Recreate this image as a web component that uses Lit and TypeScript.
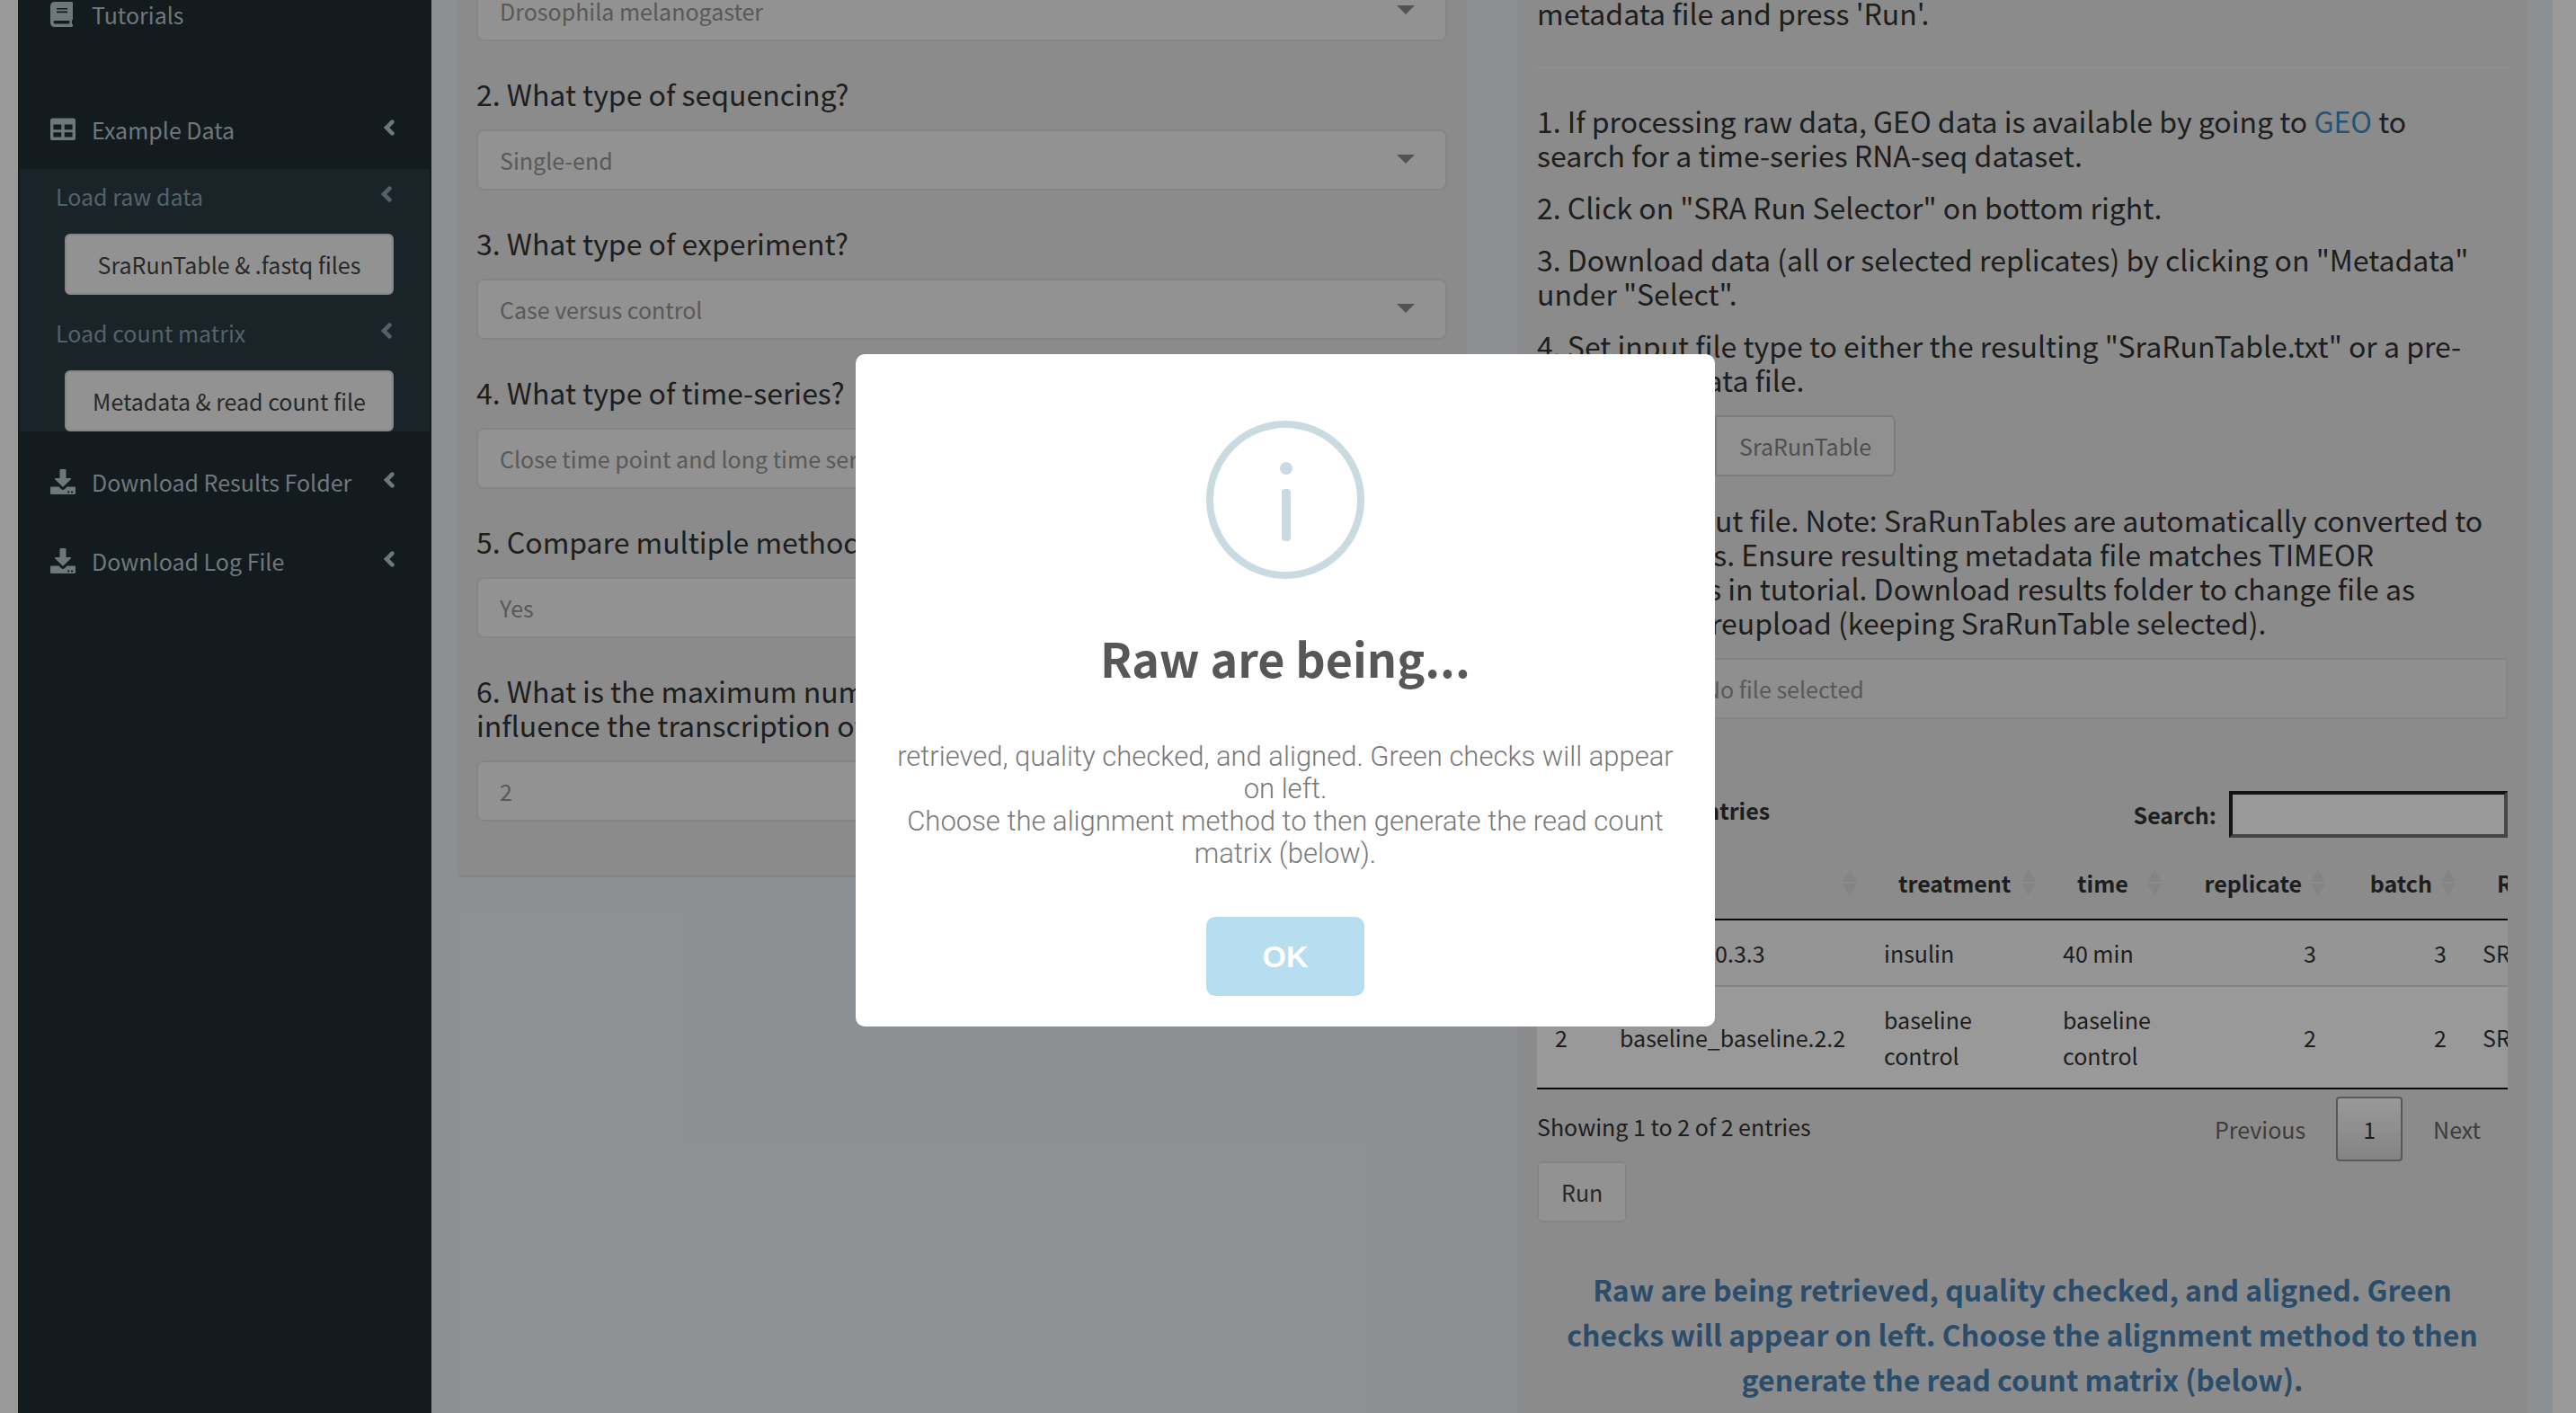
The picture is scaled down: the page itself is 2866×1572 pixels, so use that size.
import { LitElement, html, css, svg } from "lit";
import { customElement } from "lit/decorators.js";

interface Question {
  id: string;
  label: string;
  value: string;
  kind: "select" | "text";
}

const QUESTIONS: Question[] = [
  { id: "sequencing", label: "2. What type of sequencing?", value: "Single-end", kind: "select" },
  { id: "experiment", label: "3. What type of experiment?", value: "Case versus control", kind: "select" },
  { id: "series", label: "4. What type of time-series?", value: "Close time point and long time series", kind: "select" },
  { id: "methods", label: "5. Compare multiple methods?", value: "Yes", kind: "select" },
  {
    id: "factors",
    label: "6. What is the maximum number of transcription factors that can influence the transcription of a gene?",
    value: "2",
    kind: "text",
  },
];

const ROWS = [
  ["1", "insulin_40.3.3", "insulin", "40 min", "3", "3", "SRR"],
  ["2", "baseline_baseline.2.2", "baseline control", "baseline control", "2", "2", "SRR"],
];

const COLUMNS = ["", "ID", "treatment", "time", "replicate", "batch", "Run"];

const chevron = html`<svg class="chevron" viewBox="0 0 12 20" aria-hidden="true">
  <path d="M9.4 3.6 L3 10 L9.4 16.4" fill="none" stroke="currentColor" stroke-width="4.6" stroke-linecap="round" stroke-linejoin="miter" />
</svg>`;

const bookIcon = html`<svg class="icon" viewBox="0 0 28 28" aria-hidden="true">
  <path
    fill="currentColor"
    fill-rule="evenodd"
    d="M5.2 0H23.6Q25 0 25 1.4V19Q25 20 24.1 20.4Q23.6 22.6 24.1 24.6Q25 25 25 26V26.7Q25 28 23.6 28H5.2Q0 28 0 22.8V5.2Q0 0 5.2 0ZM7 7V8.6H19V7ZM7 10.6V12.2H19V10.6ZM5.2 21Q3.5 21 3.5 22.8Q3.5 24.5 5.2 24.5H21.4Q21.2 22.7 21.4 21Z"
  />
</svg>`;

const tableIcon = html`<svg class="icon" viewBox="0 0 28 28" aria-hidden="true">
  <path
    fill="currentColor"
    fill-rule="evenodd"
    d="M2.6 1.5H25.4Q28 1.5 28 4.1V23.4Q28 26 25.4 26H2.6Q0 26 0 23.4V4.1Q0 1.5 2.6 1.5ZM3.4 8.5V14.3H12.3V8.5ZM15.7 8.5V14.3H24.6V8.5ZM3.4 17.2V22.5H12.3V17.2ZM15.7 17.2V22.5H24.6V17.2Z"
  />
</svg>`;

const downloadIcon = html`<svg class="icon" viewBox="0 0 28 28" aria-hidden="true">
  <path
    fill="currentColor"
    fill-rule="evenodd"
    d="M11.8 0H16.2Q17.5 0 17.5 1.3V10H22.3Q23.8 10 22.8 11.3L14.7 19.2Q14 19.8 13.3 19.2L5.2 11.3Q4.2 10 5.7 10H10.5V1.3Q10.5 0 11.8 0ZM1.3 19.5H9.3L12 22.1Q14 23.8 16 22.1L18.7 19.5H26.7Q28 19.5 28 20.8V26.7Q28 28 26.7 28H1.3Q0 28 0 26.7V20.8Q0 19.5 1.3 19.5ZM20.3 24.3A1.1 1.1 0 1 0 20.3 26.5A1.1 1.1 0 1 0 20.3 24.3ZM24.1 24.3A1.1 1.1 0 1 0 24.1 26.5A1.1 1.1 0 1 0 24.1 24.3Z"
  />
</svg>`;

@customElement("nav-sidebar")
export class NavSidebar extends LitElement {
  static styles = css`
    :host {
      display: block;
      overflow: hidden;
      background: #222d32;
      color: #b8c7ce;
    }
    .menu {
      margin: -28px 0 0;
      padding: 0;
      list-style: none;
    }
    .item {
      display: flex;
      align-items: center;
      padding: 24px 41px 24px 36px;
      line-height: 40px;
      color: inherit;
      text-decoration: none;
    }
    .spaced {
      margin-bottom: 40px;
    }
    .icon {
      width: 28px;
      height: 28px;
      margin-right: 18px;
    }
    .chevron {
      width: 12px;
      height: 20px;
      margin-left: auto;
      margin-bottom: 4px;
    }
    .submenu {
      margin: 0 2px 12px;
      padding: 10px 40px 0;
      background: #2c3b41;
      color: #8aa4af;
    }
    .sub {
      display: flex;
      align-items: center;
      height: 40px;
      padding-right: 2px;
      line-height: 40px;
      color: inherit;
      text-decoration: none;
    }
    .load {
      display: block;
      width: calc(100% - 10px);
      height: 68px;
      margin: 22px 0 22px 10px;
      padding: 0;
      border: 2px solid #ddd;
      border-radius: 6px;
      background: #f4f4f4;
      color: #444;
      font: inherit;
    }
    .load:last-child {
      margin-bottom: 0;
    }
  `;

  render() {
    return html`
      <ul class="menu">
        <li class="spaced"><a class="item" href="#tutorials">${bookIcon}Tutorials</a></li>
        <li>
          <a class="item" href="#example">${tableIcon}Example Data${chevron}</a>
          <div class="submenu">
            <a class="sub" href="#raw">Load raw data${chevron}</a>
            <button class="load" type="button">SraRunTable &amp; .fastq files</button>
            <a class="sub" href="#matrix">Load count matrix${chevron}</a>
            <button class="load" type="button">Metadata &amp; read count file</button>
          </div>
        </li>
        <li><a class="item" href="#results">${downloadIcon}Download Results Folder${chevron}</a></li>
        <li><a class="item" href="#log">${downloadIcon}Download Log File${chevron}</a></li>
      </ul>
    `;
  }
}

@customElement("question-form")
export class QuestionForm extends LitElement {
  static styles = css`
    :host {
      display: block;
    }
    .form {
      padding: 0 21px 60px;
    }
    .question {
      display: flex;
      flex-direction: column;
      gap: 21px;
      margin-top: 39px;
    }
    .question:first-child {
      margin-top: 0;
    }
    .label {
      font-size: 32px;
      line-height: 38px;
    }
    .field {
      position: relative;
      display: flex;
    }
    .control {
      box-sizing: border-box;
      flex: 1;
      min-width: 0;
      height: 68px;
      margin: 0;
      padding: 0 24px;
      border: 2px solid #dedede;
      border-radius: 8px;
      background: #f3f3f3;
      color: #949494;
      font: inherit;
      appearance: none;
      outline: none;
    }
    .caret {
      position: absolute;
      right: 36px;
      top: 28px;
      width: 20px;
      height: 10px;
      pointer-events: none;
    }
  `;

  private control(q: Question) {
    if (q.kind === "text") {
      return html`<div class="field"><input class="control" id=${q.id} .value=${q.value} /></div>`;
    }
    return html`<div class="field">
      <select class="control" id=${q.id} aria-label=${q.label || "Organism"}>
        <option>${q.value}</option>
      </select>
      <svg class="caret" viewBox="0 0 20 10" aria-hidden="true"><path d="M0 0H20L10 10Z" fill="#8a8a8a" /></svg>
    </div>`;
  }

  render() {
    return html`<form class="form">
      <div class="question">
        ${this.control({ id: "organism", label: "", value: "Drosophila melanogaster", kind: "select" })}
      </div>
      ${QUESTIONS.map(
        (q) => html`<div class="question"><label class="label" for=${q.id}>${q.label}</label>${this.control(q)}</div>`
      )}
    </form>`;
  }
}

@customElement("metadata-table")
export class MetadataTable extends LitElement {
  static styles = css`
    :host {
      display: block;
    }
    .tools {
      display: flex;
      justify-content: space-between;
      align-items: flex-start;
      margin-bottom: 10px;
      font-weight: 700;
    }
    .length {
      display: flex;
      align-items: center;
      gap: 8px;
      height: 42px;
      line-height: 40px;
    }
    .count {
      width: 88px;
      height: 40px;
      font: inherit;
      font-weight: 400;
    }
    .search {
      display: flex;
      align-items: center;
      gap: 14px;
    }
    .query {
      box-sizing: border-box;
      width: 310px;
      height: 52px;
      border: 4px solid;
      border-color: #222 #767676 #767676 #222;
      background: #fff;
      font: inherit;
    }
    .scroll {
      overflow: hidden;
    }
    .grid {
      width: 1240px;
      table-layout: fixed;
      border-collapse: separate;
      border-spacing: 0;
      border-bottom: 2px solid #111;
    }
    .c0 { width: 72px; }
    .c1 { width: 294px; }
    .c2 { width: 199px; }
    .c3 { width: 140px; }
    .c4 { width: 182px; }
    .c5 { width: 145px; }
    .head {
      box-sizing: border-box;
      padding: 20px 0 20px 36px;
      border-bottom: 2px solid #111;
      text-align: left;
      line-height: 40px;
    }
    .headbox {
      display: flex;
      align-items: center;
      justify-content: space-between;
      padding-right: 10px;
    }
    .head.num .headbox {
      justify-content: flex-end;
      gap: 10px;
    }
    .sort {
      width: 16px;
      height: 30px;
    }
    .cell {
      padding: 16px 20px;
      line-height: 40px;
      background: #fff;
    }
    .row:first-child .cell {
      border-bottom: 2px solid #ddd;
      background: #f9f9f9;
    }
    .num {
      text-align: right;
    }
    .foot {
      display: flex;
      justify-content: space-between;
      align-items: flex-start;
      padding-top: 8px;
    }
    .info {
      padding-top: 13px;
      line-height: 40px;
    }
    .pages {
      display: flex;
      gap: 4px;
    }
    .page {
      padding: 14px 28px;
      border: 2px solid transparent;
      border-radius: 4px;
      background: none;
      color: #666;
      font: inherit;
      line-height: 40px;
    }
    .current {
      border-color: #979797;
      background: linear-gradient(#fff, #dcdcdc);
      color: #333;
    }
  `;

  private sortMark() {
    return html`<svg class="sort" viewBox="0 0 16 30" aria-hidden="true">
      ${svg`<path d="M8 0L16 14H0Z M0 16H16L8 30Z" fill="#dcdcdc" />`}
    </svg>`;
  }

  render() {
    const numeric = (i: number) => (i === 4 || i === 5 ? "num" : "");
    return html`
      <div class="tools">
        <label class="length">Show<select class="count"><option>10</option></select>entries</label>
        <label class="search">Search:<input class="query" type="search" /></label>
      </div>
      <div class="scroll">
        <table class="grid">
          <thead>
            <tr>
              ${COLUMNS.map(
                (name, i) => html`<th class="head c${i} ${numeric(i)}" scope="col">
                  <div class="headbox"><span>${name}</span>${i === 0 ? "" : this.sortMark()}</div>
                </th>`
              )}
            </tr>
          </thead>
          <tbody>
            ${ROWS.map(
              (row) => html`<tr class="row">${row.map((v, i) => html`<td class="cell ${numeric(i)}">${v}</td>`)}</tr>`
            )}
          </tbody>
        </table>
      </div>
      <div class="foot">
        <span class="info">Showing 1 to 2 of 2 entries</span>
        <div class="pages">
          <button class="page" type="button">Previous</button>
          <button class="page current" type="button">1</button>
          <button class="page" type="button">Next</button>
        </div>
      </div>
    `;
  }
}

@customElement("process-panel")
export class ProcessPanel extends LitElement {
  static styles = css`
    :host {
      display: block;
    }
    .panel {
      padding: 17px 21px 60px;
    }
    .text {
      margin: 0 0 20px;
      padding-right: 16px;
      font-size: 32px;
      line-height: 38px;
    }
    .rule {
      height: 2px;
      margin: 41px 0 39px;
      border: 0;
      background: #eee;
    }
    .link {
      color: #3c8dbc;
      text-decoration: none;
    }
    .toggle {
      display: flex;
      margin: 21px 0 29px;
    }
    .choice {
      box-sizing: border-box;
      height: 68px;
      padding: 0 25px;
      border: 2px solid #cfcfcf;
      background: #f1f1f1;
      color: #848484;
      font: inherit;
    }
    .choice:first-child {
      width: 200px;
      border-radius: 6px 0 0 6px;
    }
    .choice:last-child {
      margin-left: -2px;
      border-radius: 0 6px 6px 0;
    }
    .upload {
      display: flex;
      margin: 21px 0 80px;
    }
    .browse,
    .run {
      box-sizing: border-box;
      height: 68px;
      padding: 0 25px;
      border: 2px solid #ddd;
      border-radius: 6px;
      background: #f4f4f4;
      color: #444;
      font: inherit;
    }
    .browse {
      width: 160px;
    }
    .file {
      box-sizing: border-box;
      flex: 1;
      min-width: 0;
      height: 68px;
      padding: 0 24px;
      border: 2px solid #dcdce4;
      background: #eee;
      color: #949494;
      font: inherit;
    }
    .run {
      display: block;
    }
    .status {
      margin: 49px 0 0;
      padding: 0 20px;
      color: #4680b4;
      font-size: 32px;
      font-weight: 700;
      line-height: 50px;
      text-align: center;
    }
  `;

  render() {
    return html`<section class="panel">
      <p class="text">metadata file and press 'Run'.</p>
      <hr class="rule" />
      <p class="text">
        1. If processing raw data, GEO data is available by going to <a class="link" href="#geo">GEO</a> to search for a
        time-series RNA-seq dataset.
      </p>
      <p class="text">2. Click on "SRA Run Selector" on bottom right.</p>
      <p class="text">3. Download data (all or selected replicates) by clicking on "Metadata" under "Select".</p>
      <p class="text">
        4. Set input file type to either the resulting "SraRunTable.txt" or a pre-<wbr />made metadata file.
      </p>
      <div class="toggle">
        <button class="choice" type="button">Metadata</button>
        <button class="choice" type="button">SraRunTable</button>
      </div>
      <p class="text">
        5. Upload input file. Note: SraRunTables are automatically converted to metadata files. Ensure resulting metadata
        file matches TIMEOR specifications in tutorial. Download results folder to change file as needed, and reupload
        (keeping SraRunTable selected).
      </p>
      <div class="upload">
        <button class="browse" type="button">Browse...</button>
        <input class="file" aria-label="Input file" readonly value="No file selected" />
      </div>
      <metadata-table></metadata-table>
      <button class="run" type="button">Run</button>
      <p class="status">
        Raw are being retrieved, quality checked, and aligned. Green checks will appear on left. Choose the alignment
        method to then generate the read count matrix (below).
      </p>
    </section>`;
  }
}

@customElement("info-dialog")
export class InfoDialog extends LitElement {
  static styles = css`
    :host {
      position: absolute;
      inset: 0;
      display: flex;
      align-items: center;
      justify-content: center;
      padding: 0 6px 36px 0;
      box-sizing: border-box;
      background: rgba(0, 0, 0, 0.4);
    }
    .dialog {
      display: flex;
      flex-direction: column;
      align-items: center;
      box-sizing: border-box;
      width: 956px;
      max-width: 100%;
      padding: 74px 34px 34px;
      border-radius: 10px;
      background: #fff;
      text-align: center;
    }
    .mark {
      width: 176px;
      height: 176px;
    }
    .title {
      margin: 48px 0 52px;
      color: #575757;
      font-size: 52px;
      font-weight: 600;
      line-height: 80px;
    }
    .text {
      margin: 0 0 52px;
      color: #797979;
      font-family: Roboto, "Liberation Sans", sans-serif;
      font-size: 31px;
      font-weight: 300;
      line-height: 36px;
    }
    .ok {
      width: 176px;
      height: 88px;
      border: 0;
      border-radius: 10px;
      background: #b7ddf0;
      color: #fff;
      font: 700 34px "Liberation Sans", sans-serif;
    }
  `;

  render() {
    return html`<div class="dialog" role="dialog" aria-labelledby="title">
      <svg class="mark" viewBox="0 0 176 176" aria-hidden="true">
        <circle cx="88" cy="88" r="84" fill="none" stroke="#c9dae1" stroke-width="8" />
        <circle cx="89" cy="53" r="7" fill="#c9dae1" />
        <rect x="84" y="76" width="10" height="58" rx="4" fill="#c9dae1" />
      </svg>
      <h2 class="title" id="title">Raw are being...</h2>
      <p class="text">
        retrieved, quality checked, and aligned. Green checks will appear on left.<br />Choose the alignment method to
        then generate the read count matrix (below).
      </p>
      <button class="ok" type="button">OK</button>
    </div>`;
  }
}

@customElement("app-root")
export class AppRoot extends LitElement {
  static styles = css`
    :host {
      position: relative;
      display: block;
      height: 100vh;
      overflow: hidden;
      background: #fff;
      color: #333;
      font-family: "Noto Sans CJK JP", "Noto Sans CJK SC", sans-serif;
      font-size: 25px;
      line-height: 40px;
    }
    .page {
      display: grid;
      grid-template-columns: 460px minmax(0, 1fr);
      height: 100%;
      padding: 0 26px 0 20px;
      box-sizing: border-box;
    }
    .content {
      display: grid;
      grid-template-columns: repeat(2, minmax(0, 1fr));
      align-items: start;
      gap: 58px;
      min-height: 0;
      padding: 0 29px;
      overflow: hidden;
      background: #ecf0f5;
    }
    .box {
      margin-top: -22px;
      border-radius: 6px;
      background: #e8e8e8;
      box-shadow: 0 2px 2px rgba(60, 50, 110, 0.12);
    }
  `;

  render() {
    return html`
      <div class="page">
        <nav-sidebar></nav-sidebar>
        <main class="content">
          <question-form class="box"></question-form>
          <process-panel class="box"></process-panel>
        </main>
      </div>
      <info-dialog></info-dialog>
    `;
  }
}
